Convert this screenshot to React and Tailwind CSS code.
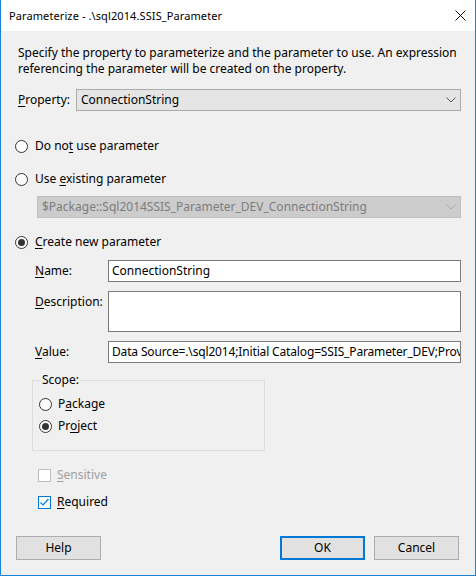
import React from "react";

const font = { fontFamily: '"Segoe UI", "Noto Sans", "Liberation Sans", sans-serif' };

function Radio({ checked }) {
  return (
    <span className="w-[13px] h-[13px] rounded-full border border-[#333333] bg-white flex items-center justify-center shrink-0">
      {checked && <span className="w-[7px] h-[7px] rounded-full bg-[#333333]" />}
    </span>
  );
}

function Chevron({ color }) {
  return (
    <svg width="10" height="6" viewBox="0 0 10 6" className="shrink-0">
      <path d="M0.5 0.5 L5 5 L9.5 0.5" fill="none" stroke={color} strokeWidth="1" />
    </svg>
  );
}

function Key({ children }) {
  return <span className="underline underline-offset-2">{children}</span>;
}

function Button({ children, primary }) {
  return (
    <button
      className={
        primary
          ? "w-[85px] h-[24px] bg-[#e1e1e1] border-2 border-[#0078d7] text-[12px] text-black flex items-center justify-center"
          : "w-[85px] h-[24px] bg-[#e1e1e1] border border-[#adadad] text-[12px] text-black flex items-center justify-center"
      }
    >
      {children}
    </button>
  );
}

export default function App() {
  return (
    <div
      className="w-[476px] h-[576px] bg-[#f0f0f0] border-x border-b border-[#1883d7] flex flex-col text-[12px] leading-[16px] text-black"
      style={font}
    >
      {/* title bar */}
      <div className="h-[31px] bg-white flex items-center justify-between pl-[8px] pr-[8px] shrink-0">
        <span className="text-[11px] tracking-[0.1px]">Parameterize - .\sql2014.SSIS_Parameter</span>
        <svg width="11" height="11" viewBox="0 0 11 11" className="mr-[1px]">
          <path d="M0.5 0.5 L10.5 10.5 M10.5 0.5 L0.5 10.5" stroke="#111" strokeWidth="1" />
        </svg>
      </div>

      <div className="flex flex-col pl-[14px] pr-[14px] pt-[14px]">
        <p className="ml-[3px]">
          Specify the property to parameterize and the parameter to use. An expression
          <br />
          referencing the parameter will be created on the property.
        </p>

        <div className="flex items-center mt-[12px] ml-[3px] h-[22px]">
          <span className="w-[58px]">
            <Key>P</Key>roperty:
          </span>
          <div className="flex-1 h-[22px] bg-[#e5e5e5] border border-[#acacac] flex items-center justify-between pl-[4px] pr-[4px]">
            <span>ConnectionString</span>
            <Chevron color="#555555" />
          </div>
        </div>

        <label className="flex items-center gap-[7px] mt-[27px] h-[16px]">
          <Radio />
          <span>
            Do no<Key>t</Key> use parameter
          </span>
        </label>

        <label className="flex items-center gap-[7px] mt-[17px] h-[16px]">
          <Radio />
          <span>
            Use <Key>e</Key>xisting parameter
          </span>
        </label>

        <div className="ml-[22px] mt-[9px] h-[22px] bg-[#cccccc] border border-[#bfbfbf] flex items-center justify-between pl-[4px] pr-[4px] text-[#7d7d7d]">
          <span>$Package::Sql2014SSIS_Parameter_DEV_ConnectionString</span>
          <Chevron color="#a8a8a8" />
        </div>

        <label className="flex items-center gap-[7px] mt-[16px] h-[16px]">
          <Radio checked />
          <span>
            <Key>C</Key>reate new parameter
          </span>
        </label>

        <div className="flex items-center ml-[20px] mt-[10px] h-[22px]">
          <span className="w-[73px]">
            <Key>N</Key>ame:
          </span>
          <div className="flex-1 h-[22px] bg-white border border-[#7a7a7a] flex items-center pl-[3px]">
            ConnectionString
          </div>
        </div>

        <div className="flex items-start ml-[20px] mt-[9px]">
          <span className="w-[73px] pt-[3px]">
            <Key>D</Key>escription:
          </span>
          <div className="flex-1 h-[41px] bg-white border border-[#7a7a7a]" />
        </div>

        <div className="flex items-center ml-[20px] mt-[9px] h-[22px]">
          <span className="w-[73px]">
            <Key>V</Key>alue:
          </span>
          <div className="flex-1 h-[22px] bg-white border border-[#7a7a7a] flex items-center pl-[3px] overflow-hidden whitespace-nowrap tracking-[-0.15px]">
            Data Source=.\sql2014;Initial Catalog=SSIS_Parameter_DEV;Provider=SQLNCLI11.1;Integrated Security=SSPI;
          </div>
        </div>

        <fieldset className="ml-[17px] mt-[9px] w-[233px] border border-[#dcdcdc] pl-[6px] pb-[16px]">
          <legend className="ml-[2px] px-[1px]">Scope:</legend>
          <label className="flex items-center gap-[6px] mt-[8px] h-[16px]">
            <Radio />
            <span>
              P<Key>a</Key>ckage
            </span>
          </label>
          <label className="flex items-center gap-[6px] mt-[6px] h-[16px]">
            <Radio checked />
            <span>
              Pr<Key>o</Key>ject
            </span>
          </label>
        </fieldset>

        <label className="flex items-center gap-[6px] ml-[23px] mt-[16px] h-[16px] text-[#a0a0a0]">
          <span className="w-[13px] h-[13px] border border-[#bcbcbc] bg-white shrink-0" />
          <span>
            <Key>S</Key>ensitive
          </span>
        </label>

        <label className="flex items-center gap-[6px] ml-[23px] mt-[11px] h-[16px]">
          <span className="w-[13px] h-[13px] border border-[#0078d7] bg-white shrink-0 flex items-center justify-center">
            <svg width="11" height="11" viewBox="0 0 11 11">
              <path d="M1.5 5.5 L4 8 L9.5 2" fill="none" stroke="#0078d7" strokeWidth="1.2" />
            </svg>
          </span>
          <span>
            <Key>R</Key>equired
          </span>
        </label>

        <div className="flex items-center justify-between mt-[26px] ml-[1px] mr-[2px]">
          <Button>Help</Button>
          <div className="flex gap-[9px]">
            <Button primary>OK</Button>
            <Button>Cancel</Button>
          </div>
        </div>
      </div>
    </div>
  );
}
